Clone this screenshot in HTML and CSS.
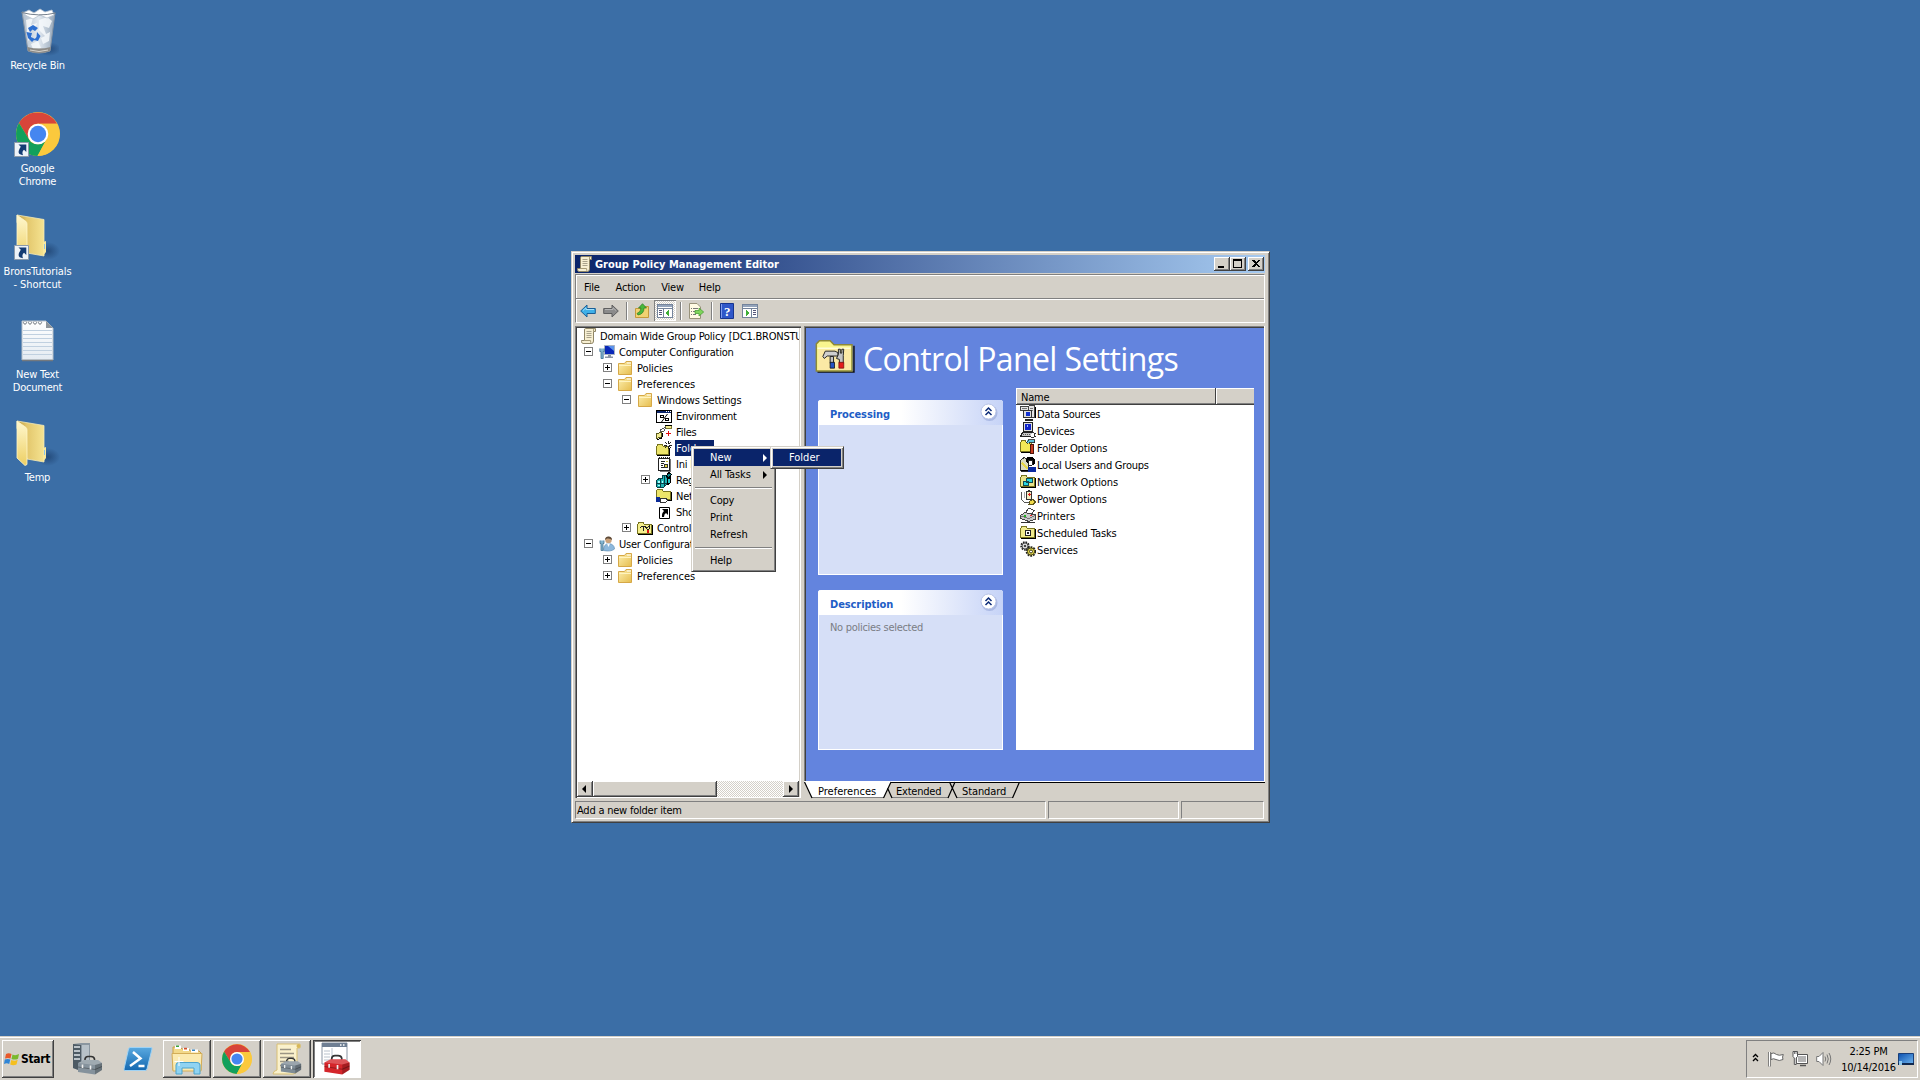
FILE: index.html
```
<!DOCTYPE html>
<html lang="en">
<head>
<meta charset="utf-8">
<title>Group Policy Management Editor</title>
<link rel="stylesheet" href="styles.css">
</head>
<body>
<svg class="defs" aria-hidden="true">
  <defs>
    <linearGradient id="gFolder" x1="0" y1="0" x2="1" y2="1"><stop offset="0" stop-color="#fdf0b0"/><stop offset="1" stop-color="#e6bd4e"/></linearGradient>
    <linearGradient id="gLeaf" x1="0" y1="0" x2="0" y2="1"><stop offset="0" stop-color="#fff8cf"/><stop offset="1" stop-color="#edcf63"/></linearGradient>
    <linearGradient id="gBack" x1="0" y1="0" x2="1" y2="0"><stop offset="0" stop-color="#b9973c"/><stop offset=".35" stop-color="#e2c66b"/><stop offset="1" stop-color="#f5e391"/></linearGradient>
    <linearGradient id="gPs" x1="0" y1="0" x2="0" y2="1"><stop offset="0" stop-color="#5aa9e0"/><stop offset="1" stop-color="#1468b0"/></linearGradient>
    <linearGradient id="gBin" x1="0" y1="0" x2="1" y2="0"><stop offset="0" stop-color="#aebccb"/><stop offset=".5" stop-color="#e3eaf1"/><stop offset="1" stop-color="#93a5b8"/></linearGradient>
    <linearGradient id="gScreen" x1="0" y1="0" x2="1" y2="1"><stop offset="0" stop-color="#0b4fae"/><stop offset="1" stop-color="#6eb4ee"/></linearGradient>
    <linearGradient id="gPage" x1="0" y1="0" x2="0" y2="1"><stop offset="0" stop-color="#ffffff"/><stop offset="1" stop-color="#e4ebf2"/></linearGradient>
    <radialGradient id="gShade"><stop offset="0" stop-color="#12305a" stop-opacity=".55"/><stop offset="1" stop-color="#12305a" stop-opacity="0"/></radialGradient>

    <symbol id="i-scroll" viewBox="0 0 16 16">
      <path d="M4.500.500H14.500V3.500H12.500V13Q12.500 15.500 10.500 15.500H2Q.500 15.300.500 13.500V12.500H3.500V2Q3.500.500 4.500.500Z" fill="#f7efd2" stroke="#8f8566"/>
      <path d="M3.500 12.500H9.500Q9.500 15 10.500 15.500M12.500 3.500V2Q12.700.700 13.500.500" fill="none" stroke="#a79b76"/>
      <path d="M5.500 3.500H10.500M5.500 5.500H10.500M5.500 7.500H10.500M5.500 9.500H10.500" stroke="#a9a28c"/>
    </symbol>
    <symbol id="i-folder" viewBox="0 0 16 16">
      <path d="M1.500 3.500H7.500L9 1.500H14.500V14.500H1.500Z" fill="url(#gFolder)" stroke="#d6a847"/>
      <path d="M10 2.500H14V3.500H10Z" fill="#fff"/><path d="M2 5.500H14" stroke="#fff3bf"/>
    </symbol>
    <symbol id="i-computer" viewBox="0 0 16 16">
      <path d="M5.500 1.500H15.500V10.500H5.500Z" fill="#0a28b8" stroke="#a9b3c4"/><path d="M9 2H15V7Z" fill="#5b93ec"/>
      <path d="M9 11H12V12.500H14V14H6V12.500H9Z" fill="#8b95a5"/><path d="M.800 4.500V7.500H2V14.500H4.200V7.500H5.300V4.500" fill="#83b4cf" stroke="#3b6f91" stroke-width=".8"/>
    </symbol>
    <symbol id="i-user" viewBox="0 0 16 16">
      <circle cx="9.500" cy="4" r="3.200" fill="#caa27b"/><path d="M6 4Q6 .500 9.500.500Q13 .500 13 4Q11 2 8 2.600Z" fill="#5d4a39"/>
      <path d="M4.500 14.500Q4.500 8 9.500 7.500Q15.300 8 15.500 13Q12 16 4.500 14.500Z" fill="#8db8dc" stroke="#6290b8" stroke-width=".7"/><path d="M8 7.500L9.500 11L11 7.500Z" fill="#fff"/>
      <path d="M1 4.500V7.500H2V14.500H4V7.500H5V4.500" fill="#83b4cf" stroke="#49758f" stroke-width=".8"/>
    </symbol>
    <symbol id="i-env" viewBox="0 0 16 16" shape-rendering="crispEdges">
      <path d="M.500 2.500H15.500V14.500H.500Z" fill="#fff" stroke="#000"/><path d="M1 3H15V5H1Z" fill="#0a246a"/><path d="M10 3.500H11M12 3.500H13M14 3.500H15" stroke="#fff"/>
      <path d="M4.500 7.500H7.500V9.500H4.500ZM9.500 10.500H12.500V12.500H9.500Z" fill="none" stroke="#000"/><path d="M11.500 6L5.500 14" stroke="#000" shape-rendering="auto"/>
    </symbol>
    <symbol id="i-files" viewBox="0 0 16 16" shape-rendering="crispEdges">
      <path d="M9 1.500H15.500V4.500H9Z" fill="#f3ec93" stroke="#7c7a30"/><path d="M9 1H16" stroke="#000"/>
      <path d="M4.500 5.500L9.500 3.500L8 7L4 8.500Z" fill="#fff" stroke="#555"/><path d="M1 9.500L6 8L5 13L.500 14.500Z" fill="#f3ec93" stroke="#5b5a20"/><path d="M7 9L5.500 14.500L1 15.500" fill="none" stroke="#000"/>
      <path d="M12 7V12M10 9.500H14.500" stroke="#e00f0f"/>
    </symbol>
    <symbol id="i-newfolder" viewBox="0 0 16 16" shape-rendering="crispEdges">
      <path d="M.500 6.500L2 4.500H6L7.500 6.500H12.500V14.500H.500Z" fill="#ece46a" stroke="#77731f"/><path d="M1 15.500H13.500V8" fill="none" stroke="#000"/>
      <path d="M12 1V9M8 5H16M9 2L15 8M15 2L9 8" stroke="#222"/><path d="M11 4H13V6H11Z" fill="#fff"/>
    </symbol>
    <symbol id="i-ini" viewBox="0 0 16 16" shape-rendering="crispEdges">
      <path d="M2.500 2.500H13.500V14.500H2.500Z" fill="#fff" stroke="#222"/><path d="M3 1.500H14" stroke="#222" stroke-dasharray="1 1"/><path d="M14.500 3V15.500H4" fill="none" stroke="#777"/>
      <path d="M5 5.500H9M5 7.500H8M5 9.500H7M5 11.500H8" stroke="#222"/><circle cx="10" cy="10" r="2" fill="#e9dc45" stroke="#333"/><path d="M10 5.500H12" stroke="#c9bb2c"/>
    </symbol>
    <symbol id="i-reg" viewBox="0 0 16 16" shape-rendering="crispEdges">
      <path d="M.500 8.500L3 6.500H6V3.500H9.500L11 5.500V12L7.500 15.500H1.500L.500 14Z" fill="#1fb5b5" stroke="#043f46"/>
      <path d="M4.500 7V15M8 4V15M1 11.500H10.500" stroke="#063f46"/><path d="M2 9H3.500V10.500H2ZM6 9H7V10.500H6ZM2 12.500H3.500V14H2Z" fill="#b2ffff"/>
      <path d="M10 4L13 .500L15.500 2.500L13 6Z" fill="#0d7f86" stroke="#000"/><path d="M11 7L14 6V11L11 13Z" fill="#26c8c8" stroke="#000"/>
    </symbol>
    <symbol id="i-net" viewBox="0 0 16 16" shape-rendering="crispEdges">
      <path d="M.500 2.500L1.500 1.500H6L7.500 3.500H14.500V11.500H.500Z" fill="#ece46a" stroke="#77731f"/><path d="M15.500 4V12.500H8" fill="none" stroke="#000"/>
      <path d="M0 9H4V14H0Z" fill="#0a2a96"/><path d="M4 10H9L12 12L10 14H4Z" fill="#fff" stroke="#333"/>
    </symbol>
    <symbol id="i-short" viewBox="0 0 16 16">
      <path d="M3.500 3.500H13.500V14.500H3.500Z" fill="#fff" stroke="#000"/><path d="M6 5H12V11L10 9Q8 10 8 13H6Q5.500 9 8 7Z" fill="#000"/>
    </symbol>
    <symbol id="i-cpanel" viewBox="0 0 16 16" shape-rendering="crispEdges">
      <path d="M.500 4.500L2 2.500H6L7.500 4.500H14.500V13.500H.500Z" fill="#f5ef8c" stroke="#77731f"/><path d="M1 14.500H15.500V5" fill="none" stroke="#000"/>
      <path d="M3 8L5 6.500H8L11 10M6 7V11M9 9L12 6V9L10 11" fill="none" stroke="#222"/><path d="M10 10H12V13H10Z" fill="#d11"/>
    </symbol>
    <symbol id="i-bigpanel" viewBox="0 0 40 36">
      <path d="M2 34H39.500V7" fill="none" stroke="#111" stroke-width="1.500"/>
      <path d="M.800 33V5L4 1.800H15L19 6H37.500V33Z" fill="#f9f58e" stroke="#8d8938" stroke-width="1.500"/><path d="M3 32V10.500H36V32Z" fill="#fbe9a5"/><path d="M2 9.500H36" stroke="#fffdd8" stroke-width="1.500"/>
      <path d="M7.500 18L10 12.500H20L23 14V17.500H12L9 20Z" fill="#cfcfcf" stroke="#222"/>
      <path d="M15 18H18.500V25H15ZM23.500 10.500V16L21.500 20L24.500 21V25H28.500V17L29 10.500H27V14.500H25.500V10.500Z" fill="#c4c4c4" stroke="#222"/>
      <path d="M15 24H19.500V30H15Z" fill="#2453c4" stroke="#111" stroke-width=".8"/><path d="M24 24H29V30H24Z" fill="#e31c1c" stroke="#7a1010" stroke-width=".8"/>
    </symbol>
    <symbol id="i-data" viewBox="0 0 16 16" shape-rendering="crispEdges">
      <path d="M.500 1.500H8.500V5.500H.500ZM8.500.500H14.500V12.500H10" fill="#e5e5e5" stroke="#444"/><path d="M2 3.500H7M10 3.500H13M10 5.500H13" stroke="#777"/><path d="M15.500 2V13" stroke="#000"/>
      <path d="M3.500 5.500H11.500V12.500H3.500Z" fill="#ddd" stroke="#333"/><path d="M6 7H10V11H6Z" fill="#1230d0"/><path d="M5.500 14H12.500V15.500H5.500Z" fill="#ddd" stroke="#222"/>
    </symbol>
    <symbol id="i-device" viewBox="0 0 16 16" shape-rendering="crispEdges">
      <path d="M3.500.500H12.500V9.500H3.500Z" fill="#ddd" stroke="#222"/><path d="M5 2H11V8H5Z" fill="#1124c8"/><path d="M7 3H8V5H7Z" fill="#9fbcff"/>
      <path d="M2.500 10.500H13L15.500 14.500H.500Z" fill="#c6c6c6" stroke="#222"/><path d="M3 12.500H12" stroke="#555" stroke-dasharray="1 1"/><path d="M12 10L15 11.500L14 15H11" fill="#fff" stroke="#333"/>
    </symbol>
    <symbol id="i-fopt" viewBox="0 0 16 16" shape-rendering="crispEdges">
      <path d="M.500 3.500L2 1.500H5L6.500 3.500H11.500V12.500H.500Z" fill="#f3ea56" stroke="#77731f"/><path d="M1 13.500H10" stroke="#000"/>
      <path d="M6.500 2.500L8 .500H14.500V3.500H9L8 5Z" fill="#5fc3d8" stroke="#222" stroke-width=".8"/><path d="M10.500 5.500H13.500V14.500H10.500Z" fill="#c93d1f" stroke="#4d1409"/>
    </symbol>
    <symbol id="i-users" viewBox="0 0 16 16" shape-rendering="crispEdges">
      <path d="M.500 4.500L4 1.500L8 3V15H1Z" fill="#dcdcc0" stroke="#333"/><path d="M6 5Q6 .500 10 .500Q15.500 .500 15.500 7L13 9L8 8Z" fill="#000"/>
      <path d="M8 5L12 4.500V9L9 10Z" fill="#fff" stroke="#222"/><path d="M8 11L15.500 10.500V15.500H8Z" fill="#0a2aa0"/><path d="M2 7L8 13" stroke="#e8d748" stroke-width="2"/><path d="M1 14.500H8" stroke="#000"/>
    </symbol>
    <symbol id="i-nopt" viewBox="0 0 16 16" shape-rendering="crispEdges">
      <path d="M.500 4.500L2 2.500H6L7.500 4.500H14.500V13.500H.500Z" fill="#e8e38b" stroke="#77731f"/><path d="M1 14.500H15.500V5" fill="none" stroke="#000"/>
      <path d="M6.500 5.500H12.500V9.500H6.500ZM3.500 8.500H8.500V12.500H3.500Z" fill="#27d6e0" stroke="#114a52"/>
    </symbol>
    <symbol id="i-power" viewBox="0 0 16 16" shape-rendering="crispEdges">
      <path d="M6.500 1.500H11.500V9.500H6.500Z" fill="#f4ecc0" stroke="#333"/><path d="M9 3V6M7.500 4.500H10.500" stroke="#e01818"/><path d="M7.500.500H10" stroke="#333"/>
      <path d="M1.500 2V8Q2 12 6 12.500H10" fill="none" stroke="#555"/><path d="M4 1.500V8" stroke="#aaa"/><path d="M10 11L13 9.500L15.500 12L13 14.500H9Z" fill="#efd94a" stroke="#5d551a"/>
    </symbol>
    <symbol id="i-printer" viewBox="0 0 16 16" shape-rendering="crispEdges">
      <path d="M5 6L9 1L14 3.500L12 7Z" fill="#fff" stroke="#444"/><path d="M.500 8.500L5 5.500L15.500 8V12L9 14.500L.500 11.500Z" fill="#c9c9c9" stroke="#444"/><path d="M1 9L9 11.500L15 8.500" fill="none" stroke="#777"/><path d="M4 8H6V9.500H4Z" fill="#1eb31e"/><path d="M1 15.500H15" stroke="#333"/><path d="M10 8.500H12" stroke="#d22"/>
    </symbol>
    <symbol id="i-task" viewBox="0 0 16 16" shape-rendering="crispEdges">
      <path d="M.500 4.500L2 2.500H6L7.500 4.500H14.500V13.500H.500Z" fill="#f1eb8d" stroke="#77731f"/><path d="M1 14.500H15.500V5" fill="none" stroke="#000"/><path d="M5.500 6.500H10.500V11.500H5.500Z" fill="#fff" stroke="#222"/><path d="M7 8H9V10H7Z" fill="#222"/>
    </symbol>
    <symbol id="i-service" viewBox="0 0 16 16">
      <circle cx="5" cy="5" r="3.700" fill="#ddd" stroke="#222" stroke-width="2" stroke-dasharray="1.500 1"/><circle cx="5" cy="5" r="3" fill="#d8d8d8" stroke="#333" stroke-width=".8"/><circle cx="5" cy="5" r="1.100" fill="#222"/>
      <circle cx="11" cy="10.500" r="4.200" fill="#e8dc4c" stroke="#222" stroke-width="2.200" stroke-dasharray="1.700 1"/><circle cx="11" cy="10.500" r="3.500" fill="#e8dc4c" stroke="#3b3710" stroke-width=".8"/><circle cx="11" cy="10.500" r="1.500" fill="#fff" stroke="#3b3710"/>
    </symbol>

    <symbol id="i-back" viewBox="0 0 16 16"><path d="M.700 8L7 2V5.500H15.300V10.500H7V14Z" fill="#3fb0e8" stroke="#1a5f96"/><path d="M3 7.500L6 4.800V6.500H14" fill="none" stroke="#a5e0fa"/></symbol>
    <symbol id="i-fwd" viewBox="0 0 16 16"><path d="M15.300 8L9 2V5.500H.700V10.500H9V14Z" fill="#8b8b8b" stroke="#5f5f5f"/><path d="M2 6.500H10V4.800L13 7.500" fill="none" stroke="#b5b5b5"/></symbol>
    <symbol id="i-up" viewBox="0 0 16 16"><path d="M1.500 5.500H7L8.500 3.500H14.500V14.500H1.500Z" fill="#f1d272" stroke="#c59a3c"/><path d="M3 10.500Q7 9 7 5H4.500L8.500.700L12.500 5H10Q10 11 4 12Z" fill="#48b83d" stroke="#267a22" stroke-width=".7"/></symbol>
    <symbol id="i-tree" viewBox="0 0 16 14" shape-rendering="crispEdges"><path d="M.500.500H15.500V13.500H.500Z" fill="#fff" stroke="#75849b"/><path d="M1 1H15V3H1Z" fill="#94a4bb"/><path d="M1 4.500H15M6.500 5V13" stroke="#75849b"/><path d="M2 6.500H5M2 8.500H5M2 10.500H5" stroke="#557"/><path d="M12 6V12L8.500 9Z" fill="#3fae37"/></symbol>
    <symbol id="i-action" viewBox="0 0 16 14" shape-rendering="crispEdges"><path d="M.500.500H15.500V13.500H.500Z" fill="#fff" stroke="#75849b"/><path d="M1 1H15V3H1Z" fill="#94a4bb"/><path d="M1 4.500H15M9.500 5V13" stroke="#75849b"/><path d="M11 6.500H14M11 8.500H14M11 10.500H14" stroke="#557"/><path d="M4 6V12L7.500 9Z" fill="#3fae37"/></symbol>
    <symbol id="i-export" viewBox="0 0 16 16"><path d="M1.500.500H9L12.500 4V15.500H1.500Z" fill="#fffbe4" stroke="#98927a"/><path d="M3 5.500H4M5 5.500H10M3 8.500H4M5 8.500H8M3 11.500H4M5 11.500H8" stroke="#777"/><path d="M7 7.500H11V5L15.700 9L11 13V10.500H7Z" fill="#7fd45b" stroke="#3d9a2d" stroke-width=".7"/></symbol>
    <symbol id="i-help" viewBox="0 0 14 16"><path d="M.500.500H13.500V15.500H.500Z" fill="#2f57c9" stroke="#17348f"/><path d="M1.500 1V15" stroke="#7e9bee"/><text x="7.300" y="13" class="qmark">?</text></symbol>

    <symbol id="i-chrome" viewBox="0 0 44 44">
      <circle cx="22" cy="22" r="22" fill="#fbc93d"/>
      <path d="M3 11A22 22 0 0 1 41 11.700H22A10.300 10.300 0 0 0 13 17L12.700 27Z" fill="#d8453a"/>
      <path d="M3 11A22 22 0 0 0 21.500 44L31 27Q27 33 21 32.300Q15 32 12.700 26.800Z" fill="#12a05c"/>
      <path d="M41 11.700H22V22H31L30.500 27L21.500 44A22 22 0 0 0 41 11.700Z" fill="#fbc93d"/>
      <circle cx="22" cy="22" r="10.300" fill="#fff"/><circle cx="22" cy="22" r="8.200" fill="#4586f0"/>
    </symbol>
    <symbol id="i-link" viewBox="0 0 15 15"><path d="M.500.500H14.500V14.500H.500Z" fill="#eef3f8" stroke="#8c9bab"/><path d="M4.500 2.500H12.300V10L10 7.800Q7.500 9.500 9 13.200Q1.500 12.500 6.800 4.800Z" fill="#143c74"/></symbol>
    <symbol id="i-open" viewBox="0 0 44 48">
      <ellipse cx="32" cy="37" rx="12" ry="9" fill="url(#gShade)"/>
      <path d="M1 1L28 5.500V42L11 39L1 8Z" fill="url(#gBack)" stroke="#f4eab7" stroke-width=".8"/><path d="M27 28L30 27V38L27 42Z" fill="#f8e89c"/><path d="M28.500 30V35" stroke="#8fc5e8"/>
      <path d="M1 1L10 7.500Q11 8.500 11 10V44.500L9 45.500L1 38Z" fill="url(#gLeaf)" stroke="#fff6c9" stroke-width=".8"/>
    </symbol>
    <symbol id="i-bin" viewBox="0 0 40 48">
      <ellipse cx="30" cy="41" rx="12" ry="7" fill="url(#gShade)"/>
      <path d="M3 4L36 5L31 43Q20 47 9 43Z" fill="url(#gBin)" stroke="#8795a5"/>
      <path d="M7 12L14 10L12 17L18 15L16 22L10 20L13 29L9 33ZM20 12L28 9L33 13L30 20L24 18L27 26L31 24L30 33L24 36L22 30L26 28L20 22ZM12 36L19 33L22 40L14 41Z" fill="#f6f9fb" opacity=".85"/>
      <path d="M9 43L8.500 39Q20 42 31.700 39L31 43Q20 47 9 43Z" fill="#8c8a86"/><path d="M11 42Q20 45 29 42" fill="none" stroke="#d5d2cc"/>
      <path d="M4 5L10 2L15 5L21 1L26 4L33 2L35 7L28 10L21 7L14 11L8 8Z" fill="#fff" stroke="#b7c4d1" stroke-width=".8"/>
      <path d="M9 20L14 17L19 20L16 23L13.500 21.500L11 24ZM7.500 24L13 25L12 29L16 31L13 34L9 30ZM18 24L21.500 28L19 33L15 32L17.500 29Z" fill="#2d6fd0"/>
      <path d="M2.500 4.500Q20 9 36.500 5" fill="none" stroke="#74808d"/>
    </symbol>
    <symbol id="i-text" viewBox="0 0 34 44">
      <path d="M1 3H25L32 10V42H1Z" fill="url(#gPage)" stroke="#b6c0ca"/><path d="M1 42.500H32" stroke="#74797e" stroke-width="1.500"/><path d="M25 3V10H32Z" fill="#8d959c"/>
      <path d="M3 3.500A1.500 1.500 0 1 0 5 3.500M8 3.500A1.500 1.500 0 1 0 10 3.500M13 3.500A1.500 1.500 0 1 0 15 3.500M18 3.500A1.500 1.500 0 1 0 20 3.500" fill="none" stroke="#6f7780"/>
      <path d="M2 12.500H31M2 16.500H31M2 20.500H31M2 24.500H31M2 28.500H31M2 32.500H31M2 36.500H31" stroke="#c0d0e0"/>
    </symbol>
    <symbol id="i-winlogo" viewBox="0 0 16 16">
      <path d="M2 3Q4.500 1.500 7.500 3L6.500 7.500Q4 6.300 1 7.600Z" fill="#e8592b"/><path d="M8.500 3.500Q11.500 5 15 3L14 7.700Q11 9.300 7.500 8Z" fill="#7ab92d"/>
      <path d="M.800 8.600Q3.800 7.300 6.300 8.500L5.200 13Q2.800 11.600 0 13Z" fill="#2f85d6"/><path d="M7.300 9Q10.500 10.500 13.700 8.800L12.500 13.400Q9.500 15 6.200 13.500Z" fill="#f5bf1e"/>
    </symbol>
    <symbol id="i-toolbox" viewBox="0 0 26 20">
      <path d="M8 7V4Q8.500 1.500 11 1.500H14Q17 1.500 17.500 4V7" fill="none" stroke="#333" stroke-width="1.600"/><path d="M1 8L7 5H21L25 8V15L18 19.500L1 17Z" fill="currentColor"/><path d="M1 8L7 5H21L25 8L18 10Z" fill="#fff" opacity=".22"/><path d="M18 10L25 8V15L18 19.500Z" fill="#000" opacity=".22"/><path d="M1 12L18 14.500L25 11.500" fill="none" stroke="#000" stroke-opacity=".3"/><path d="M5.500 9.500V13M13.500 10.500V14.500" stroke="#eee" stroke-width="1.600"/>
    </symbol>
    <symbol id="i-server" viewBox="0 0 32 34">
      <path d="M1 2L9 1H18V27L9 29L1 26Z" fill="#8a969f"/><path d="M1 2L9 3V29L1 26Z" fill="#4d5a64"/><path d="M2 5H8M2 9H8M2 13H8M2 17H8" stroke="#dfe6ea" stroke-width="1.500"/><path d="M10 3H17V26H10Z" fill="#b7c1c8"/>
      <use href="#i-toolbox" x="5" y="13" width="26" height="20" color="#85929c"/>
    </symbol>
    <symbol id="i-ps" viewBox="0 0 30 26">
      <path d="M7 1.500H28Q29.500 1.500 29 3L24 23Q23.500 24.500 22 24.500H2Q.500 24.500 1 23L5.500 3Q6 1.500 7 1.500Z" fill="url(#gPs)" stroke="#9fd2f4"/><path d="M10 6L17.500 12.500L7 20M15.500 20H21.500" fill="none" stroke="#fff" stroke-width="2.500"/>
    </symbol>
    <symbol id="i-explorer" viewBox="0 0 32 32">
      <path d="M2 4H9L11 6H18L19 8H28L30 10V27H2Z" fill="#f2d98a" stroke="#c99f49"/><path d="M4 2.500H10V6H4ZM12 5H18V8H12ZM20 6.500H27V9.500H20Z" fill="#fff"/><path d="M5 2.500H8V4H5Z" fill="#3aa33c"/><path d="M13 4.800H16V6.500H13Z" fill="#d4502d"/><path d="M21 6.500H24V8H21Z" fill="#3486c4"/>
      <path d="M1 10.500H31L30 28H2Z" fill="#fbeab0" stroke="#d3ad58"/>
      <path d="M5 31V22Q5 19.500 8 19.500H26Q29 19.500 29 22V31H23V25H11V31Z" fill="#8fd3f2" stroke="#4ca3cd"/><path d="M8 14V23M3.500 18.500H12.500" stroke="#fff"/>
    </symbol>
    <symbol id="i-gpm" viewBox="0 0 32 32">
      <path d="M6 1H29V5H26V27Q26 31 22 31H2Q2 28 6 27Z" fill="#faf1cc" stroke="#d8bf74"/><path d="M9 6.500H20M9 10.500H23M9 14.500H23M9 18.500H18M9 22.500H14" stroke="#9b9584" stroke-width="1.300"/><circle cx="27.500" cy="3" r="2" fill="#d8b858"/>
      <use href="#i-toolbox" x="9" y="14" width="22" height="17" color="#7f8c96"/>
    </symbol>
    <symbol id="i-mmc" viewBox="0 0 32 34">
      <path d="M1 1H26V22H1Z" fill="#fff" stroke="#8a95a3"/><path d="M1 1H26V5H1Z" fill="#6f7f93"/><path d="M19 3H20.500M22 3H23.500" stroke="#fff" stroke-width="1.500"/><path d="M3 9H9M3 12H9M3 15H9M3 18H9M11 6V21" stroke="#b9c2cc"/>
      <use href="#i-toolbox" x="2" y="12" width="28" height="21" color="#d4252a"/>
    </symbol>
    <symbol id="i-flag" viewBox="0 0 16 16"><path d="M1.500 1V15.500" stroke="#666" stroke-width="2.500"/><path d="M1.500 1V15.500" stroke="#fff"/><path d="M3 2.500Q6 1 8.500 3.500Q11 5 15.300 3.500Q14 6 15 8.500Q11 10.500 8 8.500Q5.500 7 3 8.500Z" fill="#fff" stroke="#666"/></symbol>
    <symbol id="i-netw" viewBox="0 0 16 16"><path d="M4.500 3.500H15.500V12.500H4.500Z" fill="#fff" stroke="#555"/><path d="M6 5H14V11H6Z" fill="#b4b4b4"/><path d="M8 14.500H14" stroke="#555" stroke-width="1.500"/><path d="M1 .500H5.500V5.500L4.200 7V13.500H2.300V7L1 5.500Z" fill="#fff" stroke="#555"/><path d="M2.500 1V3M4 1V3" stroke="#555" stroke-width=".8"/></symbol>
    <symbol id="i-sound" viewBox="0 0 16 16"><path d="M.700 5.500H3L7 1.500V14.500L3 10.500H.700Z" fill="#fff" stroke="#777"/><path d="M9 5.500Q10.500 8 9 10.500M11 3.500Q13.500 8 11 12.500M13 2Q16.500 8 13 14" fill="none" stroke="#777"/></symbol>
    <symbol id="i-show" viewBox="0 0 16 14"><path d="M.500 1.500H15.500V11.500H.500Z" fill="url(#gScreen)" stroke="#1a3f78"/><path d="M0 12H16" stroke="#10284e" stroke-width="2"/><path d="M1 9H4V13H1Z" fill="#8ec9ee"/></symbol>
    <symbol id="i-chev" viewBox="0 0 18 18"><circle cx="9.500" cy="10" r="8" fill="#93a4d6" opacity=".6"/><circle cx="8.500" cy="8.500" r="7.500" fill="#fff" stroke="#b9c4e6"/><path d="M5.500 8L8.500 5L11.500 8M5.500 12L8.500 9L11.500 12" fill="none" stroke="#0c2b78" stroke-width="1.500"/></symbol>
  </defs>
</svg>

<main class="desktop">
  <figure class="shortcut s-bin"><svg class="pic"><use href="#i-bin" x="19" width="40" height="48"/></svg><figcaption>Recycle Bin</figcaption></figure>
  <figure class="shortcut s-chrome"><svg class="pic"><use href="#i-chrome" x="16" y="1" width="44" height="44"/><use href="#i-link" x="14" y="31" width="15" height="15"/></svg><figcaption>Google<br>Chrome</figcaption></figure>
  <figure class="shortcut s-brons"><svg class="pic"><use href="#i-open" x="16" width="44" height="48"/><use href="#i-link" x="14" y="31" width="15" height="15"/></svg><figcaption class="snug">BronsTutorials<br>- Shortcut</figcaption></figure>
  <figure class="shortcut s-text"><svg class="pic"><use href="#i-text" x="21" y="1" width="34" height="44"/></svg><figcaption>New Text<br>Document</figcaption></figure>
  <figure class="shortcut s-temp"><svg class="pic"><use href="#i-open" x="16" width="44" height="48"/></svg><figcaption>Temp</figcaption></figure>

  <section class="window">
    <header class="titlebar">
      <svg class="ic"><use href="#i-scroll"/></svg>
      <h1>Group Policy Management Editor</h1>
      <button class="wbtn"><svg viewBox="0 0 16 14"><path d="M4 9H10V11H4Z"/></svg></button>
      <button class="wbtn"><svg viewBox="0 0 16 14"><path d="M3 2H12V11H3ZM4 4V10H11V4Z" fill-rule="evenodd"/></svg></button>
      <button class="wbtn close"><svg viewBox="0 0 16 14"><path d="M4 3H6L8 5L10 3H12L9 6.500L12 10H10L8 8L6 10H4L7 6.500Z"/></svg></button>
    </header>

    <div class="bars">
      <nav class="menubar"><span>File</span><span>Action</span><span>View</span><span>Help</span></nav>
      <div class="toolbar">
        <svg class="ic"><use href="#i-back"/></svg>
        <svg class="ic fwd"><use href="#i-fwd"/></svg>
        <i class="sep"></i>
        <svg class="ic"><use href="#i-up"/></svg>
        <span class="pressed"><svg class="ic"><use href="#i-tree"/></svg></span>
        <i class="sep"></i>
        <svg class="ic"><use href="#i-export"/></svg>
        <i class="sep"></i>
        <svg class="ic"><use href="#i-help"/></svg>
        <svg class="ic last"><use href="#i-action"/></svg>
      </div>
    </div>

    <div class="panes">
      <div class="treepane">
        <ul class="tree">
          <li class="root"><svg class="ic"><use href="#i-scroll"/></svg><span>Domain Wide Group Policy [DC1.BRONSTUTORIALS.COM]</span></li>
          <li class="l1"><b class="box"></b><svg class="ic"><use href="#i-computer"/></svg><span>Computer Configuration</span></li>
          <li class="l2"><b class="box plus"></b><svg class="ic"><use href="#i-folder"/></svg><span class="snug">Policies</span></li>
          <li class="l2"><b class="box"></b><svg class="ic"><use href="#i-folder"/></svg><span class="fit">Preferences</span></li>
          <li class="l3"><b class="box"></b><svg class="ic"><use href="#i-folder"/></svg><span>Windows Settings</span></li>
          <li class="l4"><svg class="ic"><use href="#i-env"/></svg><span>Environment</span></li>
          <li class="l4"><svg class="ic"><use href="#i-files"/></svg><span>Files</span></li>
          <li class="l4"><svg class="ic"><use href="#i-newfolder"/></svg><span class="sel fit">Folders</span></li>
          <li class="l4"><svg class="ic"><use href="#i-ini"/></svg><span>Ini Files</span></li>
          <li class="l4 has"><b class="box plus"></b><svg class="ic"><use href="#i-reg"/></svg><span>Registry</span></li>
          <li class="l4"><svg class="ic"><use href="#i-net"/></svg><span>Network Shares</span></li>
          <li class="l4"><svg class="ic"><use href="#i-short"/></svg><span>Shortcuts</span></li>
          <li class="l3"><b class="box plus"></b><svg class="ic"><use href="#i-cpanel"/></svg><span>Control Panel Settings</span></li>
          <li class="l1"><b class="box"></b><svg class="ic"><use href="#i-user"/></svg><span>User Configuration</span></li>
          <li class="l2"><b class="box plus"></b><svg class="ic"><use href="#i-folder"/></svg><span class="snug">Policies</span></li>
          <li class="l2"><b class="box plus"></b><svg class="ic"><use href="#i-folder"/></svg><span class="fit">Preferences</span></li>
        </ul>
        <div class="scroll">
          <span class="sbtn"><svg viewBox="0 0 12 12"><path d="M7 2V10L3 6Z"/></svg></span>
          <span class="thumb"></span>
          <span class="track"></span>
          <span class="sbtn"><svg viewBox="0 0 12 12"><path d="M4 2V10L8 6Z"/></svg></span>
        </div>
      </div>

      <div class="right">
        <div class="view">
          <div class="heading"><svg><use href="#i-bigpanel"/></svg><h2>Control Panel Settings</h2></div>
          <div class="cols">
            <div class="cards">
              <article class="card c1"><header><h3>Processing</h3><svg><use href="#i-chev"/></svg></header></article>
              <article class="card c2"><header><h3>Description</h3><svg><use href="#i-chev"/></svg></header><p>No policies selected</p></article>
            </div>
            <div class="list">
              <div class="lhead"><span class="name">Name</span><span class="rest"></span></div>
              <ul>
                <li><svg class="ic"><use href="#i-data"/></svg><span>Data Sources</span></li>
                <li><svg class="ic"><use href="#i-device"/></svg><span>Devices</span></li>
                <li class="snug"><svg class="ic"><use href="#i-fopt"/></svg><span>Folder Options</span></li>
                <li><svg class="ic"><use href="#i-users"/></svg><span>Local Users and Groups</span></li>
                <li class="snug"><svg class="ic"><use href="#i-nopt"/></svg><span>Network Options</span></li>
                <li class="snug"><svg class="ic"><use href="#i-power"/></svg><span>Power Options</span></li>
                <li class="fit"><svg class="ic"><use href="#i-printer"/></svg><span>Printers</span></li>
                <li class="snug"><svg class="ic"><use href="#i-task"/></svg><span>Scheduled Tasks</span></li>
                <li class="snug"><svg class="ic"><use href="#i-service"/></svg><span>Services</span></li>
              </ul>
            </div>
          </div>
        </div>
        <div class="tabs">
          <svg class="tabshape" viewBox="0 0 461 17">
            <path d="M0 0H87L80 15.500H8Z" fill="#fff"/>
            <path d="M8 15.500H80M88 15.500H144.500M153 15.500H209" stroke="#808080"/>
            <path d="M87 .500H461" stroke="#000"/>
            <path d="M.500 0L8 16M87 0L79.500 16M83.500 6L88 16M151 0L144 16M145.500 0L153 16M215.500 0L208.500 16" fill="none" stroke="#000" stroke-width="1.200"/>
          </svg>
          <span class="t1 fit">Preferences</span><span class="t2">Extended</span><span class="t3 snug">Standard</span>
        </div>
      </div>
    </div>

    <footer class="status"><span class="st1">Add a new folder item</span><span class="st2"></span><span class="st3"></span></footer>
  </section>

  <div class="menu main">
    <div class="mi on"><span class="fit">New</span><svg viewBox="0 0 6 10"><path d="M1 1V9L5 5Z"/></svg></div>
    <div class="mi"><span class="snug">All Tasks</span><svg viewBox="0 0 6 10"><path d="M1 1V9L5 5Z"/></svg></div>
    <hr>
    <div class="mi">Copy</div>
    <div class="mi fit">Print</div>
    <div class="mi wide">Refresh</div>
    <hr>
    <div class="mi">Help</div>
  </div>
  <div class="menu sub"><div class="mi on fit">Folder</div></div>
</main>

<footer class="taskbar">
  <button class="tb start"><svg class="ic"><use href="#i-winlogo"/></svg>Start</button>
  <span class="pin"><svg class="w32 t34"><use href="#i-server"/></svg></span>
  <span class="pin"><svg class="ps"><use href="#i-ps"/></svg></span>
  <button class="tb app"><svg class="w32"><use href="#i-explorer"/></svg></button>
  <button class="tb app"><svg class="w30"><use href="#i-chrome"/></svg></button>
  <button class="tb app"><svg class="w32"><use href="#i-gpm"/></svg></button>
  <button class="tb app active"><svg class="w32 t34"><use href="#i-mmc"/></svg></button>
  <div class="tray">
    <svg class="up" viewBox="0 0 7 9"><path d="M1 4L3.500 1.500L6 4M1 8L3.500 5.500L6 8" fill="none" stroke="#000" stroke-width="1.300"/></svg>
    <svg class="ic"><use href="#i-flag"/></svg>
    <svg class="ic"><use href="#i-netw"/></svg>
    <svg class="ic"><use href="#i-sound"/></svg>
    <time>2:25 PM<br>10/14/2016</time>
    <svg class="show"><use href="#i-show"/></svg>
  </div>
</footer>
</body>
</html>
```
FILE: styles.css
```
* { box-sizing: border-box; margin: 0; padding: 0; }
html, body { height: 100%; overflow: hidden; }
body {
  display: flex; flex-direction: column;
  background: #3b6ea6; color: #000; cursor: default;
  font: 11px/13px "DejaVu Sans Condensed", "DejaVu Sans", sans-serif;
  letter-spacing: -0.22px;
}
ul { list-style: none; }
svg { display: block; flex: none; overflow: visible; }
button { font: inherit; letter-spacing: inherit; color: inherit; border: 0; background: none; }
.defs { position: absolute; width: 0; height: 0; }
.ic { width: 16px; height: 16px; }
.fit { letter-spacing: 0; }
.snug { letter-spacing: -0.11px; }
.wide { letter-spacing: 0.1px; }
.qmark { font: bold 13px "Liberation Serif", serif; fill: #fff; text-anchor: middle; letter-spacing: 0; }

/* desktop */
.desktop { position: relative; flex: 1; }
.shortcut { position: absolute; left: 0; width: 75px; text-align: center; color: #fff; }
.shortcut .pic { width: 75px; height: 48px; }
.shortcut figcaption { margin-top: 3px; white-space: nowrap; }
.s-bin { top: 8px; }
.s-chrome { top: 111px; }
.s-brons { top: 214px; }
.s-text { top: 317px; }
.s-temp { top: 420px; }

/* window frame */
.window {
  position: absolute; left: 571px; top: 251px; width: 699px; height: 572px; padding: 3px 4px 3px 3px;
  display: flex; flex-direction: column;
  background: #d4d0c8; border: 1px solid; border-color: #d4d0c8 #404040 #404040 #d4d0c8;
  box-shadow: inset 1px 1px #fff, inset -1px -1px #808080;
}
.titlebar {
  display: flex; align-items: center; height: 18px; padding: 0 1px 0 2px;
  background: linear-gradient(90deg, #0a246a, #a6caf0); color: #fff;
}
.titlebar h1 { flex: 1; margin: 1px 0 0 2px; font-size: 11px; font-weight: bold; letter-spacing: 0; }
.wbtn {
  width: 16px; height: 14px; background: #d4d0c8;
  box-shadow: inset -1px -1px #404040, inset 1px 1px #fff, inset -2px -2px #808080;
}
.wbtn svg { width: 16px; height: 14px; shape-rendering: crispEdges; }
.wbtn.close { margin-left: 2px; }

.bars { margin-top: 1px; height: 49px; border: 1px solid; border-color: #808080 #fff #fff #808080; box-shadow: inset 1px 1px #fff; }
.menubar { display: flex; align-items: center; gap: 16px; height: 24px; padding-left: 8px; border-bottom: 1px solid #808080; }
.menubar span { padding-top: 3px; }
.menubar span:last-child { margin-left: -1px; }
.toolbar { display: flex; align-items: center; height: 23px; padding-left: 4px; border-top: 1px solid #fff; }
.toolbar .fwd { margin-left: 7px; }
.sep { width: 2px; height: 18px; margin: 0 6px 0 7px; border-left: 1px solid #808080; border-right: 1px solid #fff; }
.pressed {
  width: 22px; height: 21px; margin-left: 4px; padding: 3px;
  background: repeating-conic-gradient(#fff 0 25%, #d4d0c8 0 50%) 0 0 / 2px 2px;
  box-shadow: inset 1px 1px #808080, inset -1px -1px #fff;
}
.pressed + .sep { margin-left: 4px; }
.toolbar .last { margin-left: 7px; }

/* panes */
.panes { display: flex; height: 472px; margin-top: 3px; }
.treepane {
  display: flex; flex-direction: column; width: 226px; padding: 2px 2px 0 2px;
  background: #fff; box-shadow: inset 1px 1px #808080, inset 2px 2px #404040, inset -1px -1px #fff, inset -2px -1px #d4d0c8;
}
.tree { flex: 1; width: 222px; overflow: hidden; white-space: nowrap; }
.tree li { display: flex; align-items: center; height: 16px; }
.tree li > span { height: 16px; padding: 2px 2px 0; margin-left: 2px; line-height: 13px; }
.tree .root > span { margin-left: 1px; }
.tree .l2 > svg { margin-left: -1px; }
.root { padding-left: 4px; }
.l1 { padding-left: 7px; }
.l2 { padding-left: 26px; }
.l3 { padding-left: 45px; }
.l4 { padding-left: 79px; }
.l4.has { padding-left: 64px; }
.box {
  width: 9px; height: 9px; margin-right: 6px; border: 1px solid #808080;
  background: linear-gradient(#000, #000) center / 5px 1px no-repeat;
}
.box.plus { background: linear-gradient(#000, #000) center / 5px 1px no-repeat, linear-gradient(#000, #000) center / 1px 5px no-repeat; }
.tree .sel { padding-left: 1px; margin-left: 3px; background: #0a246a; color: #fff; }

.scroll { display: flex; height: 17px; padding-bottom: 1px; }
.sbtn, .thumb { background: #d4d0c8; box-shadow: inset -1px -1px #404040, inset 1px 1px #fff, inset -2px -2px #808080; }
.sbtn { width: 16px; padding: 2px; }
.sbtn svg { width: 12px; height: 12px; }
.thumb { width: 124px; }
.track { flex: 1; background: repeating-conic-gradient(#fff 0 25%, #d4d0c8 0 50%) 0 0 / 2px 2px; }

.right { display: flex; flex-direction: column; width: 461px; margin-left: 3px; }
.view {
  height: 456px; padding: 2px 0 0 2px; background: #6384de;
  border-right: 1px solid #fff; border-bottom: 1px solid #fff;
  box-shadow: inset 1px 1px #808080, inset 2px 2px #404040;
}
.heading { display: flex; height: 60px; padding: 12px 0 0 9px; color: #fff; }
.heading svg { width: 40px; height: 35px; margin-top: -1px; }
.heading h2 { margin: 0 0 0 8px; font: 400 32px/38px "Open Sans", "Noto Sans", sans-serif; letter-spacing: -0.62px; white-space: nowrap; }
.cols { display: flex; height: 362px; padding-left: 12px; }
.cards { width: 185px; padding-top: 12px; }
.card { border: 1px solid #fff; border-top: 0; background: #d6dff7; border-radius: 3px 3px 0 0; }
.card header {
  display: flex; justify-content: space-between; height: 25px; margin: 0 -1px; padding: 3px 5px 0 12px;
  background: linear-gradient(90deg, #fff 45%, #c6d3f7); border-radius: 3px 3px 0 0;
}
.card h3 { margin-top: 5px; font-size: 11px; letter-spacing: -0.08px; color: #215dc6; }
.card header svg { width: 18px; height: 18px; }
.card p { padding: 6px 0 0 11px; color: #7a7d85; letter-spacing: -0.29px; }
.c1 { height: 175px; }
.c2 { height: 160px; margin-top: 15px; }
.list { width: 238px; margin-left: 13px; background: #fff; }
.lhead { display: flex; height: 17px; }
.lhead span { background: #d4d0c8; box-shadow: inset 0 -1px #404040, inset 1px 1px #fff, inset 0 -2px #808080; }
.lhead .name { width: 200px; padding: 3px 0 0 5px; border-right: 1px solid #404040; }
.lhead .rest { flex: 1; }
.list li { display: flex; align-items: center; gap: 1px; height: 17px; padding-left: 4px; }
.list li span { padding-top: 2px; }

.tabs { position: relative; display: flex; height: 16px; padding: 3px 0 0 14px; }
.tabs span { position: relative; }
.tabshape { position: absolute; left: 0; top: 0; width: 461px; height: 17px; }
.t1 { width: 78px; }
.t2 { width: 66px; }

.status { display: flex; gap: 2px; height: 19px; margin-top: 3px; }
.status span { border: 1px solid; border-color: #808080 #fff #fff #808080; }
.st1 { width: 471px; padding: 2px 0 0 1px; }
.st2 { width: 131px; }
.st3 { width: 83px; }

/* context menus */
.menu {
  position: absolute; padding: 2px; background: #d4d0c8;
  border: 1px solid; border-color: #d4d0c8 #404040 #404040 #d4d0c8;
  box-shadow: inset 1px 1px #fff, inset -1px -1px #808080;
}
.menu.main { left: 691px; top: 446px; width: 85px; height: 126px; }
.menu.sub { left: 770px; top: 446px; width: 74px; height: 23px; }
.mi { display: flex; justify-content: space-between; align-items: center; height: 17px; padding: 0 4px 0 16px; }
.main .mi { margin-right: 1px; }
.mi svg { width: 6px; height: 10px; }
.mi.on { background: #0a246a; color: #fff; fill: #fff; }
.menu hr { height: 2px; margin: 4px 1px 3px; border: 0; border-top: 1px solid #808080; border-bottom: 1px solid #fff; }

/* taskbar */
.taskbar {
  display: flex; align-items: center; height: 44px; padding: 2px 2px 1px 2px;
  background: #d4d0c8; border-top: 1px solid #d4d0c8; box-shadow: inset 0 1px #fff;
}
.tb {
  display: flex; align-items: center; justify-content: center; height: 38px;
  box-shadow: inset -1px -1px #404040, inset 1px 1px #fff, inset -2px -2px #808080;
}
.start { justify-content: flex-start; width: 52px; padding-left: 2px; gap: 1px; font-size: 12px; font-weight: bold; letter-spacing: -0.3px; margin-right: 9px; }
.pin { display: flex; align-items: center; justify-content: center; width: 50px; height: 38px; }
.tb.app { width: 48px; margin-right: 2px; }
.tb.active { background: #fff; box-shadow: inset 1px 1px #404040, inset -1px -1px #fff, inset 2px 2px #808080; }
.w32 { width: 32px; height: 32px; }
.w30 { width: 30px; height: 30px; }
.t34 { height: 34px; }
.ps { width: 30px; height: 26px; }
.tray {
  display: flex; align-items: center; width: 172px; height: 38px; margin-left: auto; padding-left: 5px;
  border: 1px solid; border-color: #808080 #fff #fff #808080;
}
.tray .up { width: 7px; height: 9px; margin: -3px 9px 0 0; }
.tray .ic { margin-right: 8px; }
.tray time { width: 57px; margin: 1px 1px 0 0; line-height: 16px; text-align: center; letter-spacing: -0.25px; }
.tray .show { width: 16px; height: 14px; }
```
